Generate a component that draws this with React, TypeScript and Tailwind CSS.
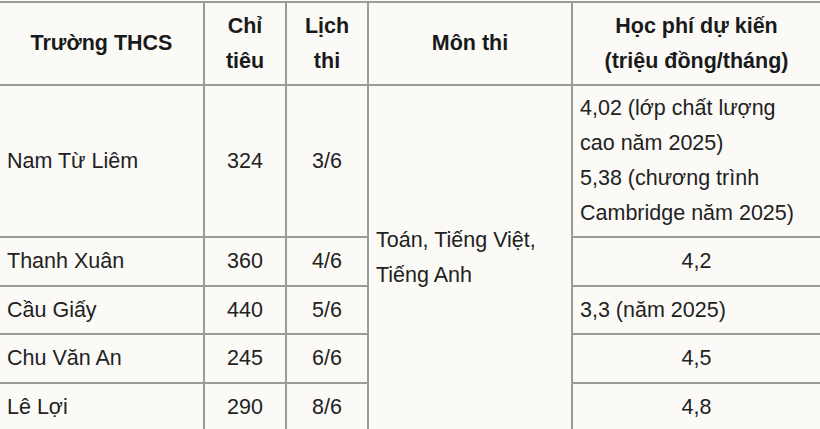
const font = { fontFamily: '"Liberation Sans", Arial, sans-serif' };

type Row = {
  school: string;
  quota: string;
  date: string;
  fee: string[];
  feeAlign: "left" | "center";
  h: string;
};

const rows: Row[] = [
  {
    school: "Nam Từ Liêm",
    quota: "324",
    date: "3/6",
    fee: ["4,02 (lớp chất lượng cao năm 2025)", "5,38 (chương trình Cambridge năm 2025)"],
    feeAlign: "left",
    h: "h-[152px]",
  },
  { school: "Thanh Xuân", quota: "360", date: "4/6", fee: ["4,2"], feeAlign: "center", h: "h-[49px]" },
  { school: "Cầu Giấy", quota: "440", date: "5/6", fee: ["3,3 (năm 2025)"], feeAlign: "left", h: "h-[48px]" },
  { school: "Chu Văn An", quota: "245", date: "6/6", fee: ["4,5"], feeAlign: "center", h: "h-[49px]" },
  { school: "Lê Lợi", quota: "290", date: "8/6", fee: ["4,8"], feeAlign: "center", h: "h-[48px]" },
];

const cell = "border-2 border-[#9b9b9b] px-[7px] align-middle";

export default function App() {
  return (
    <div className="w-[820px] h-[429px] overflow-hidden bg-[#fbfaf7]" style={font}>
      <table className="table-fixed border-collapse w-[822px] -ml-[2px] mt-px text-[21.5px] leading-[35px] text-[#222]">
        <colgroup>
          <col className="w-[205px]" />
          <col className="w-[82px]" />
          <col className="w-[82px]" />
          <col className="w-[204px]" />
          <col className="w-[249px]" />
        </colgroup>
        <thead>
          <tr className="h-[83px] font-bold text-[#1a1a1a]">
            <th className={`${cell} text-center`}>Trường THCS</th>
            <th className={`${cell} text-center`}>Chỉ tiêu</th>
            <th className={`${cell} text-center`}>Lịch thi</th>
            <th className={`${cell} text-center`}>Môn thi</th>
            <th className={`${cell} text-center`}>
              Học phí dự kiến
              <br />
              (triệu đồng/tháng)
            </th>
          </tr>
        </thead>
        <tbody>
          {rows.map((r, i) => (
            <tr key={r.school} className={r.h}>
              <td className={`${cell} text-left`}>{r.school}</td>
              <td className={`${cell} text-center`}>{r.quota}</td>
              <td className={`${cell} text-center`}>{r.date}</td>
              {i === 0 && (
                <td rowSpan={5} className={`${cell} text-left`}>
                  Toán, Tiếng Việt, Tiếng Anh
                </td>
              )}
              <td className={`${cell} ${r.feeAlign === "center" ? "text-center" : "text-left"}`}>
                {r.fee.map((f) => (
                  <div key={f}>{f}</div>
                ))}
              </td>
            </tr>
          ))}
        </tbody>
      </table>
    </div>
  );
}
